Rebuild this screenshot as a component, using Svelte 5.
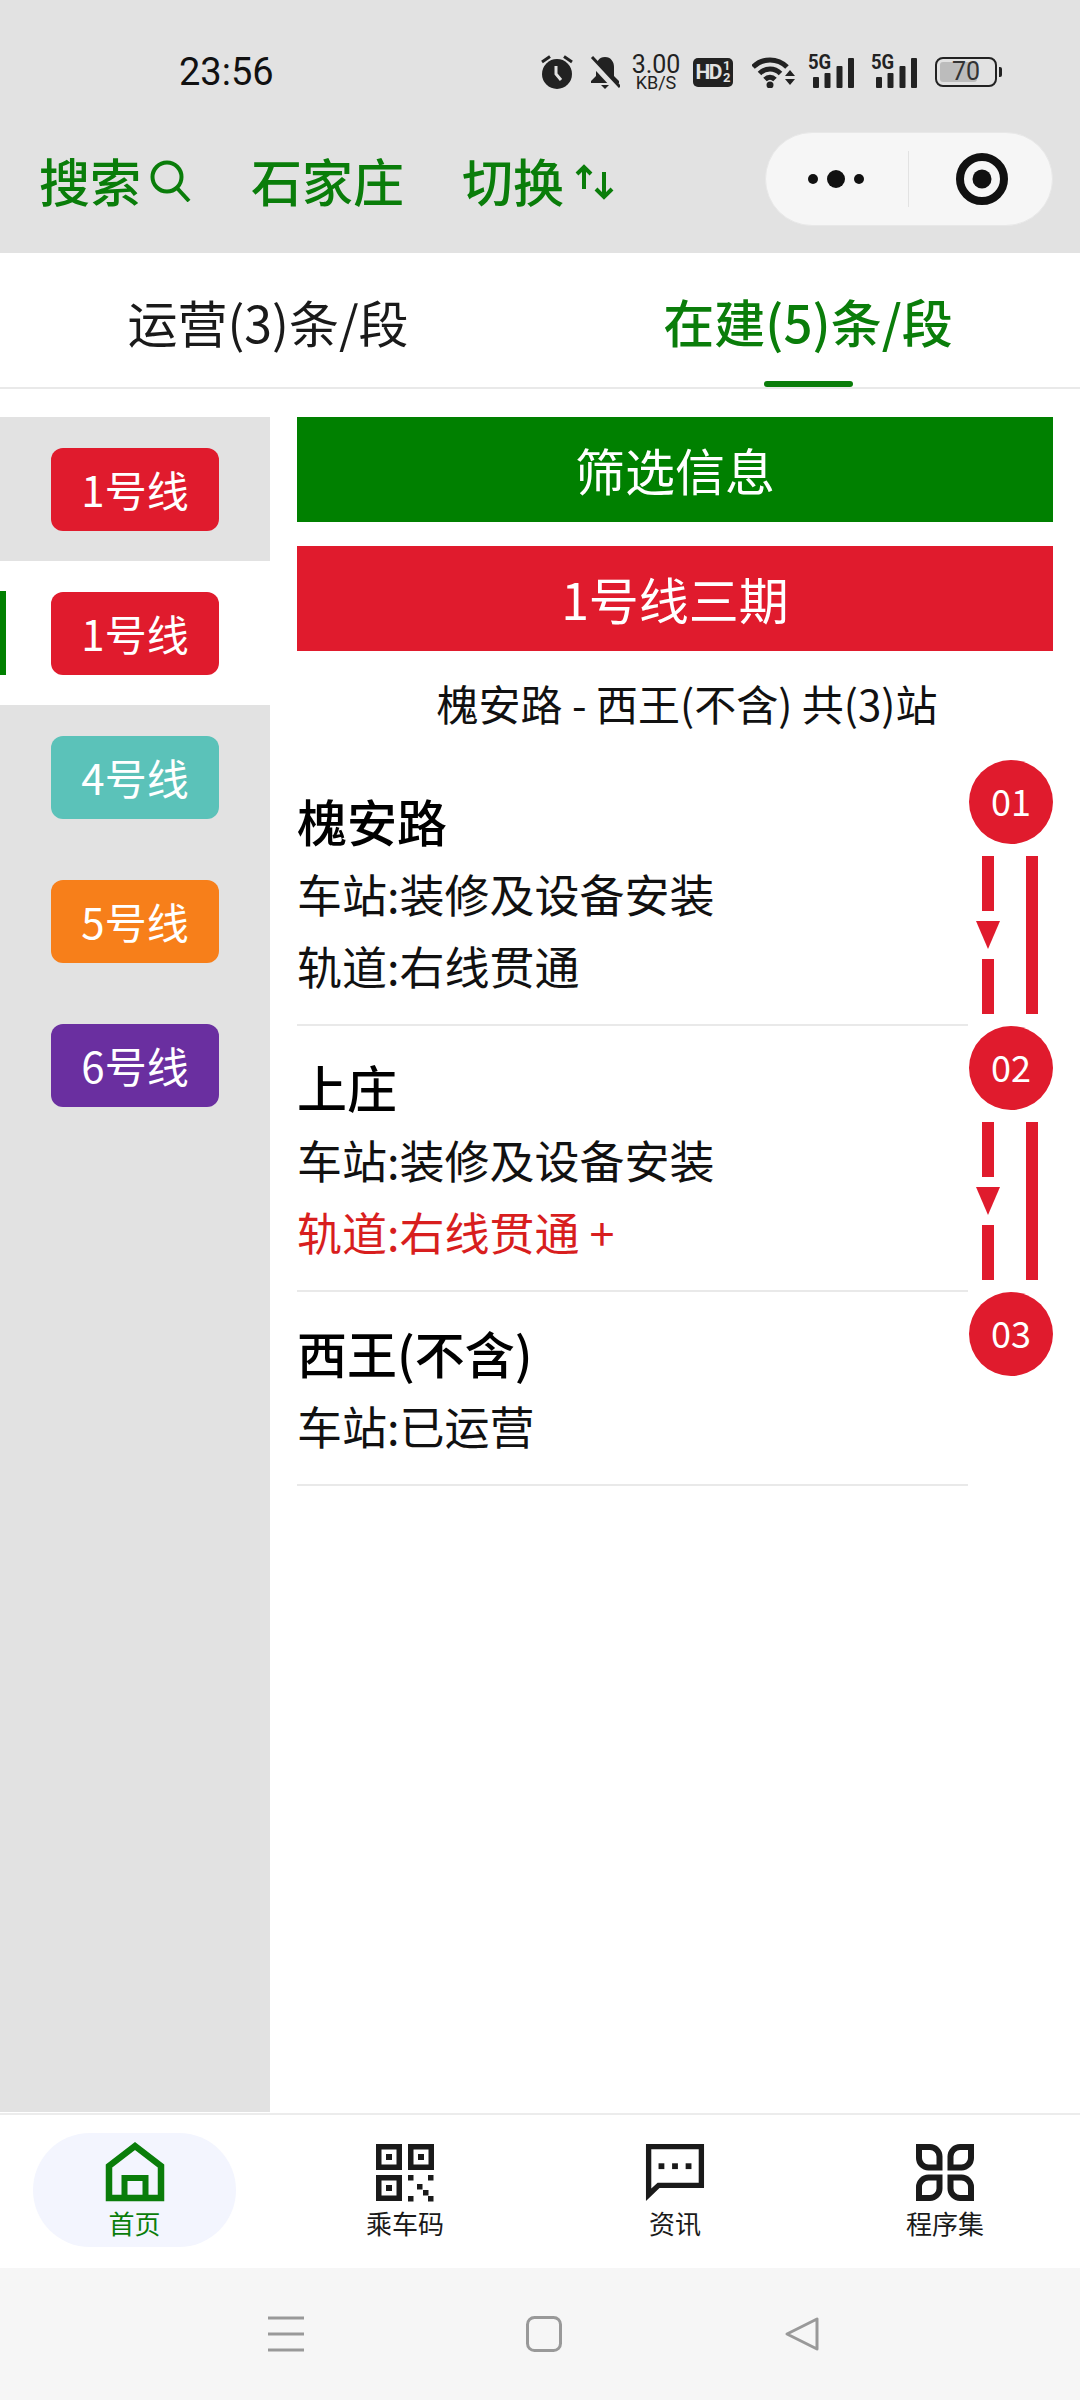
<script>
  const lines = [
    { name: '1号线', color: '#e01b2d' },
    { name: '1号线', color: '#e01b2d', active: true },
    { name: '4号线', color: '#5bc2b9' },
    { name: '5号线', color: '#f77f1a' },
    { name: '6号线', color: '#6a2fa0' }
  ];
  const stations = [
    { no: '01', name: '槐安路', info: [{ t: '车站:装修及设备安装' }, { t: '轨道:右线贯通' }], link: true },
    { no: '02', name: '上庄', info: [{ t: '车站:装修及设备安装' }, { t: '轨道:右线贯通 +', red: true }], link: true },
    { no: '03', name: '西王(不含)', info: [{ t: '车站:已运营' }], link: false }
  ];
</script>

<div class="app">
  <div class="top">
    <div class="status">
      <span class="time">23:56</span>
      <div class="icons">
        <svg class="alarm" width="32" height="34" viewBox="0 0 32 34"><circle cx="16" cy="19" r="15" fill="#222"/><path d="M1 7 9 1.500M31 7 23 1.500" stroke="#222" stroke-width="3"/><path d="M15 11v8l5 6" fill="none" stroke="#e2e2e2" stroke-width="3"/></svg>
        <svg class="bell" width="30" height="34" viewBox="0 0 30 34"><path d="M15 2c-6 0-9 5-9 10v9l-5 5v2h28v-2l-5-5v-9c0-5-3-10-9-10Z" fill="#222"/><path d="M11 30h8l-4 4Z" fill="#222"/><path d="M0 5 26 33" stroke="#e2e2e2" stroke-width="6"/><path d="M2 2 30 32" stroke="#222" stroke-width="3"/></svg>
        <div class="speed"><span class="sp1">3.00</span><span class="sp2">KB/S</span></div>
        <div class="hd"><span class="hdt">HD</span><span class="frac"><i>1</i><i>2</i></span></div>
        <svg class="wifi" width="44" height="32" viewBox="0 0 44 32"><g fill="none" stroke="#222" stroke-width="5"><path d="M1 11C10.500 1.500 25.500 1.500 35 11"/><path d="M7.500 17.500C13.500 11.500 22.500 11.500 28.500 17.500"/><path d="M13 23.500C16 20.500 20 20.500 23 23.500"/></g><circle cx="18" cy="29" r="3.500" fill="#222"/><path d="M33 20h10l-5-6ZM33 23h10l-5 6Z" fill="#222"/></svg>
        <svg class="sig" width="46" height="32" viewBox="0 0 46 32"><text x="0" y="13" transform="translate(-1 0) scale(.88 1)" class="fg">5G</text><rect x="4" y="21" width="6" height="11" rx="1" fill="#222"/><rect x="15.500" y="17" width="6" height="15" rx="1" fill="#222"/><rect x="27.500" y="10" width="6" height="22" rx="1" fill="#222"/><rect x="39" y="2" width="6" height="30" rx="1" fill="#222"/></svg>
        <svg class="sig second" width="46" height="32" viewBox="0 0 46 32"><text x="0" y="13" transform="translate(-1 0) scale(.88 1)" class="fg">5G</text><rect x="4" y="21" width="6" height="11" rx="1" fill="#222"/><rect x="15.500" y="17" width="6" height="15" rx="1" fill="#222"/><rect x="27.500" y="10" width="6" height="22" rx="1" fill="#222"/><rect x="39" y="2" width="6" height="30" rx="1" fill="#222"/></svg>
        <div class="battery"><div class="cell"><span class="fill"></span><span class="pct">70</span></div><span class="nub"></span></div>
      </div>
    </div>
    <div class="head">
      <div class="menu">
        <div class="m m1"><span>搜索</span><svg width="42" height="42" viewBox="0 0 42 42"><circle cx="18" cy="17" r="14.500" fill="none" stroke="#0a7d0a" stroke-width="4"/><path d="M28 28 40 41" stroke="#0a7d0a" stroke-width="4"/></svg></div>
        <div class="m m2"><span>石家庄</span></div>
        <div class="m m3"><span>切换</span><svg width="40" height="36" viewBox="0 0 40 36"><path d="M9 25V3M2 10 9 3l7 7M29 8V33M21 25l8 8 8-8" fill="none" stroke="#0a7d0a" stroke-width="4"/></svg></div>
      </div>
      <div class="capsule">
        <div class="dots"><i></i><b></b><i></i></div>
        <span class="sep"></span>
        <svg width="52" height="52" viewBox="0 0 52 52"><circle cx="26" cy="26" r="22" fill="none" stroke="#111" stroke-width="8"/><circle cx="26" cy="26" r="9.500" fill="#111"/></svg>
      </div>
    </div>
  </div>

  <div class="tabs">
    <div class="tab">运营(3)条/段</div>
    <div class="tab on">在建(5)条/段</div>
  </div>

  <div class="body">
    <aside class="side">
      {#each lines as l}
        <div class="line" class:active={l.active}>
          <span class="badge" style="background:{l.color}">{l.name}</span>
        </div>
      {/each}
    </aside>
    <main class="main">
      <div class="bar green">筛选信息</div>
      <div class="bar red">1号线三期</div>
      <div class="route">槐安路 - 西王(不含) 共(3)站</div>
      {#each stations as s}
        <div class="station">
          <div class="info">
            <div class="sname">{s.name}</div>
            {#each s.info as r}
              <div class="row" class:hot={r.red}>{r.t}</div>
            {/each}
          </div>
          <div class="rail">
            <div class="num">{s.no}</div>
            {#if s.link}
              <div class="link">
                <div class="down"><span class="seg"></span><span class="tri"></span><span class="seg"></span></div>
                <span class="solid"></span>
              </div>
            {/if}
          </div>
        </div>
      {/each}
    </main>
  </div>

  <nav class="tabbar">
    <div class="item home">
      <svg width="64" height="60" viewBox="0 0 64 60"><path d="M6 56V24L32 4 58 24V56Z" fill="none" stroke="#0a7d0a" stroke-width="6.500"/><path d="M21.500 56V36H42.500V56" fill="none" stroke="#0a7d0a" stroke-width="6"/></svg>
      <span>首页</span>
    </div>
    <div class="item">
      <svg width="64" height="60" viewBox="0 0 64 60" fill="#1a1a1a">
        <path fill-rule="evenodd" d="M3 2h26v26H3ZM8.500 7.500v15h15v-15Z"/><rect x="13" y="12" width="6" height="6"/>
        <path fill-rule="evenodd" d="M35 2h26v26H35ZM40.500 7.500v15h15v-15Z"/><rect x="45" y="12" width="6" height="6"/>
        <path fill-rule="evenodd" d="M3 33h26v26H3ZM8.500 38.500v15h15v-15Z"/><rect x="13" y="43" width="6" height="6"/>
        <rect x="35" y="33" width="5.500" height="5.500"/><rect x="55" y="33" width="5.500" height="5.500"/><rect x="44" y="42" width="5.500" height="5.500"/><rect x="50" y="48" width="5.500" height="5.500"/><rect x="35" y="54" width="5.500" height="5.500"/><rect x="55" y="54" width="5.500" height="5.500"/>
      </svg>
      <span>乘车码</span>
    </div>
    <div class="item">
      <svg width="64" height="62" viewBox="0 0 64 62" fill="#1a1a1a">
        <path fill-rule="evenodd" d="M2 2H62V47.500H16L2 61ZM7.500 7.500V48L14 42H56.500V7.500Z"/>
        <rect x="15" y="22" width="6" height="6"/><rect x="29" y="22" width="6" height="6"/><rect x="43" y="22" width="6" height="6"/>
      </svg>
      <span>资讯</span>
    </div>
    <div class="item">
      <svg width="64" height="60" viewBox="0 0 64 60" fill="none" stroke="#1a1a1a" stroke-width="6">
        <path d="M6 5H17A9.500 9.500 0 0 1 26.500 14.500V25.500H15.500A9.500 9.500 0 0 1 6 16Z"/>
        <path d="M58 5H47A9.500 9.500 0 0 0 37.500 14.500V25.500H48.500A9.500 9.500 0 0 0 58 16Z"/>
        <path d="M6 56H17A9.500 9.500 0 0 0 26.500 46.500V35.500H15.500A9.500 9.500 0 0 0 6 45Z"/>
        <path d="M58 56H47A9.500 9.500 0 0 1 37.500 46.500V35.500H48.500A9.500 9.500 0 0 1 58 45Z"/>
      </svg>
      <span>程序集</span>
    </div>
  </nav>

  <div class="sysnav">
    <svg width="36" height="36" viewBox="0 0 36 36"><path d="M0 2H36M0 18H36M0 34H36" stroke="#999" stroke-width="3"/></svg>
    <svg width="36" height="36" viewBox="0 0 36 36"><rect x="1.500" y="1.500" width="33" height="33" rx="7" fill="none" stroke="#999" stroke-width="3"/></svg>
    <svg width="36" height="36" viewBox="0 0 36 36"><path d="M33 3V33L3 18Z" fill="none" stroke="#999" stroke-width="3" stroke-linejoin="round"/></svg>
  </div>
</div>

<style>
  :global(body) { margin: 0; }
  .app {
    width: 1080px; height: 2400px; display: flex; flex-direction: column; background: #fff;
    font-family: "Noto Sans CJK SC", "Noto Sans", sans-serif; color: #111; overflow: hidden;
  }
  .top { height: 253px; box-sizing: border-box; padding-top: 34px; background: #e2e2e2; flex: none; }
  .status { height: 76px; display: flex; align-items: center; padding: 0 78px 0 179px; }
  .time { font: 400 38px/1 Roboto, sans-serif; color: #111; }
  .icons { margin-left: auto; display: flex; align-items: center; height: 76px; }
  .icons > * { flex: none; }
  .bell { margin-left: 17px; }
  .speed { margin-left: 11px; width: 50px; display: flex; flex-direction: column; align-items: center; color: #222; font-family: Roboto, sans-serif; }
  .sp1 { font-size: 25px; line-height: 20px; }
  .sp2 { font-size: 18px; line-height: 15px; }
  .hd { margin-left: 12px; width: 40px; height: 29px; border-radius: 5px; background: #222; color: #e2e2e2; display: flex; align-items: center; justify-content: center; font-family: Roboto, sans-serif; font-weight: 700; }
  .hdt { font-size: 21px; letter-spacing: -1.500px; line-height: 1; }
  .frac { display: flex; flex-direction: column; margin-left: 2px; }
  .frac i { font-style: normal; font-size: 13px; line-height: 12px; }
  .wifi { margin-left: 19px; }
  .sig { margin-left: 13px; overflow: visible; }
  .sig.second { margin-left: 17px; }
  .fg { font: 700 21px Roboto, sans-serif; fill: #222; }
  .battery { margin-left: 17px; display: flex; align-items: center; }
  .cell { width: 62px; height: 30px; box-sizing: border-box; border: 2.500px solid #222; border-radius: 8px; padding: 3px; display: flex; position: relative; }
  .fill { width: 37px; background: #bcbcbc; border-radius: 3px; }
  .pct { position: absolute; left: 0; right: 0; top: 0; bottom: 0; text-align: center; font: 400 25px/25px Roboto, sans-serif; color: #333; }
  .nub { width: 3px; height: 10px; background: #222; margin-left: 2px; border-radius: 0 2px 2px 0; }

  .head { margin-top: 22px; display: flex; justify-content: space-between; padding: 0 27px 0 39px; }
  .menu { display: flex; height: 94px; align-items: center; color: #0a7d0a; font-size: 51px; line-height: 60px; font-weight: 500; }
  .m { display: flex; align-items: center; }
  .m span { position: relative; top: 1px; }
  .m1 svg { margin-left: 8px; position: relative; top: 2px; }
  .m2 { margin-left: 60px; }
  .m3 { margin-left: 58px; }
  .m3 svg { margin-left: 11px; position: relative; top: 3px; }
  .capsule { width: 288px; height: 94px; box-sizing: border-box; border: 1px solid #e8e8e8; border-radius: 47px; background: #f6f6f6; display: flex; align-items: center; }
  .dots { display: flex; align-items: center; margin-left: 42px; width: 56px; justify-content: space-between; }
  .dots i { width: 10px; height: 10px; border-radius: 50%; background: #111; }
  .dots b { width: 18px; height: 18px; border-radius: 50%; background: #111; }
  .sep { width: 1px; height: 56px; background: #e2e2e2; margin-left: 44px; }
  .capsule svg { margin-left: 47px; }

  .tabs { height: 134px; flex: none; border-bottom: 2px solid #e9e9e9; display: flex; }
  .tab { width: 540px; text-align: center; font-size: 50px; line-height: 136px; position: relative; color: #1a1a1a; padding-right: 4px; box-sizing: border-box; }
  .tab.on { color: #0a7d0a; font-size: 51px; font-weight: 500; }
  .tab.on::after { content: ""; position: absolute; left: 224px; bottom: 0; width: 89px; height: 6px; border-radius: 3px; background: #0a7d0a; }

  .body { height: 1724px; flex: none; display: flex; }
  .side { width: 270px; height: 1695px; margin-top: 28px; background: #e2e2e2; flex: none; }
  .line { height: 144px; display: flex; align-items: center; justify-content: center; position: relative; }
  .line.active { background: #fff; }
  .line.active::before { content: ""; position: absolute; left: 0; top: 30px; width: 6px; height: 84px; background: #008000; }
  .badge { width: 168px; height: 83px; border-radius: 12px; color: #fff; font-size: 42px; line-height: 81px; text-align: center; }
  .main { width: 756px; margin: 28px 0 0 27px; }
  .bar { height: 105px; color: #fff; font-size: 50px; line-height: 105px; text-align: center; }
  .green { background: #008000; margin-bottom: 24px; }
  .red { background: #e01b2d; }
  .route { height: 109px; box-sizing: border-box; padding: 0 0 6px 24px; display: flex; align-items: center; justify-content: center; font-size: 42px; color: #111; }
  .station { display: flex; justify-content: space-between; }
  .info { width: 671px; padding-top: 23px; padding-bottom: 22px; border-bottom: 2px solid #e9e9e9; height: max-content; }
  .sname { font-size: 50px; line-height: 75px; font-weight: 500; color: #000; }
  .row { font-size: 45px; line-height: 72px; color: #111; }
  .row.hot { color: #d81e1e; }
  .rail { width: 84px; flex: none; }
  .num { width: 84px; height: 84px; border-radius: 50%; background: #e01b2d; color: #fff; font-size: 36px; line-height: 80px; text-align: center; }
  .link { display: flex; margin: 12px 0 0 7px; }
  .down { width: 24px; display: flex; flex-direction: column; align-items: center; }
  .seg { width: 12px; height: 55px; background: #e01b2d; }
  .tri { width: 0; height: 0; margin: 10px 0; border-left: 12px solid transparent; border-right: 12px solid transparent; border-top: 28px solid #e01b2d; }
  .solid { width: 12px; height: 158px; background: #e01b2d; margin-left: 26px; }

  .tabbar { height: 135px; flex: none; border-top: 2px solid #ececec; padding-top: 18px; display: grid; grid-template-columns: repeat(4, 270px); }
  .item { height: 114px; display: flex; flex-direction: column; align-items: center; padding-top: 9px; box-sizing: border-box; font-size: 26px; line-height: 36px; color: #1a1a1a; }
  .item svg { display: block; height: 60px; flex: none; overflow: visible; }
  .item span { margin-top: 3px; }
  .home { width: 203px; margin-left: 33px; border-radius: 57px; background: #f3f5fe; color: #0a7d0a; }
  .sysnav { height: 132px; flex: none; background: #f6f6f6; display: flex; align-items: center; justify-content: center; gap: 222px; padding-left: 8px; box-sizing: border-box; }
</style>
